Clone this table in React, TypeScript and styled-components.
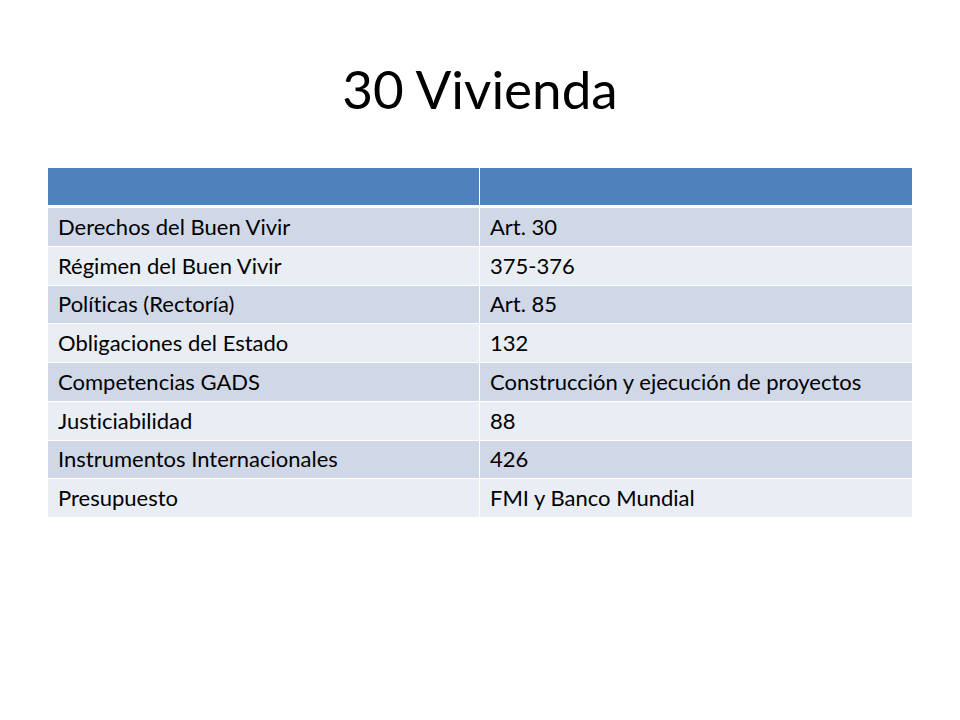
import React from "react";
import styled, { createGlobalStyle } from "styled-components";

const GlobalStyle = createGlobalStyle`
  html, body {
    margin: 0;
    padding: 0;
    background: #ffffff;
  }
  body {
    font-family: "Lato", "Open Sans", "Liberation Sans", sans-serif;
    font-variant-ligatures: none;
    color: #000000;
  }
`;

const Slide = styled.div`
  width: 960px;
  height: 720px;
  box-sizing: border-box;
  padding: 62px 48px 0 48px;
  display: flex;
  flex-direction: column;
  background: #ffffff;
`;

const Title = styled.h1`
  margin: 0 0 53px 0;
  font-family: "Lato", "Open Sans", sans-serif;
  font-weight: 400;
  font-size: 53px;
  line-height: 1;
  height: 53px;
  text-align: center;
  color: #000000;
  font-variant-ligatures: none;
`;

const Table = styled.div`
  display: grid;
  grid-template-columns: 432px 432px;
  width: 864px;
`;

const HeaderCell = styled.div<{ $first?: boolean }>`
  height: 37px;
  background: #4f81bd;
  border-bottom: 3px solid #ffffff;
  border-right: ${(p) => (p.$first ? "1px solid #ffffff" : "none")};
  box-sizing: content-box;
`;

const Cell = styled.div<{ $odd: boolean; $first: boolean; $top: boolean }>`
  height: 37.75px;
  display: flex;
  align-items: center;
  padding: 0 10px;
  background: ${(p) => (p.$odd ? "#d0d8e8" : "#e9edf4")};
  border-top: ${(p) => (p.$top ? "none" : "1px solid #ffffff")};
  border-right: ${(p) => (p.$first ? "1px solid #ffffff" : "none")};
  font-size: 22px;
  line-height: 1;
  white-space: nowrap;
  color: #000000;
  font-variant-ligatures: none;
`;

const rows: [string, string][] = [
  ["Derechos del Buen Vivir", "Art. 30"],
  ["Régimen del Buen Vivir", "375-376"],
  ["Políticas (Rectoría)", "Art. 85"],
  ["Obligaciones del Estado", "132"],
  ["Competencias GADS", "Construcción y ejecución de proyectos"],
  ["Justiciabilidad", "88"],
  ["Instrumentos Internacionales", "426"],
  ["Presupuesto", "FMI y Banco Mundial"],
];

export default function App() {
  return (
    <>
      <GlobalStyle />
      <Slide>
        <Title>30 Vivienda</Title>
        <Table>
          <HeaderCell $first />
          <HeaderCell />
          {rows.map(([a, b], i) => (
            <React.Fragment key={a}>
              <Cell $odd={i % 2 === 0} $first $top={i === 0}>
                {a}
              </Cell>
              <Cell $odd={i % 2 === 0} $first={false} $top={i === 0}>
                {b}
              </Cell>
            </React.Fragment>
          ))}
        </Table>
      </Slide>
    </>
  );
}
